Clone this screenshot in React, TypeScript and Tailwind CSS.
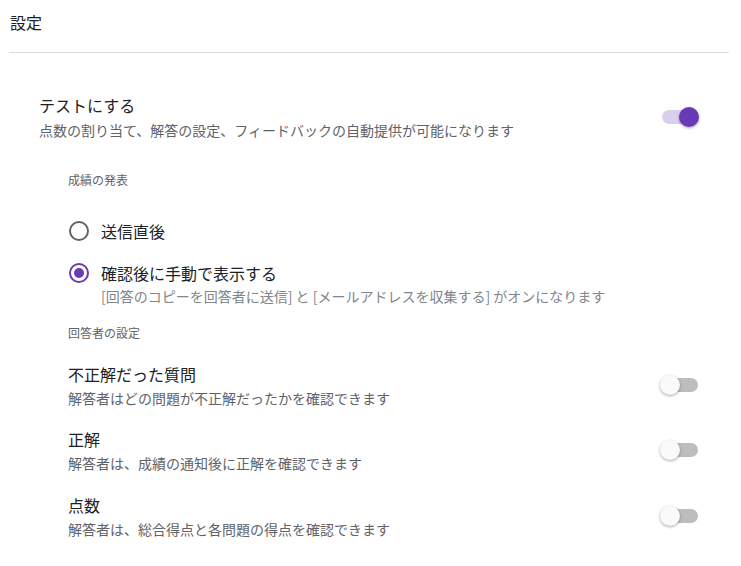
import * as React from "react";

const font = { fontFamily: "'Noto Sans CJK JP', 'Noto Sans', sans-serif" };

function Toggle({ on }: { on: boolean }) {
  return (
    <div className="relative h-5 w-9 shrink-0">
      <div
        className={
          "absolute left-0 top-[3px] h-[14px] w-9 rounded-full " +
          (on ? "bg-[#d9d0ee]" : "bg-[#bdbdbd]")
        }
      />
      <div
        className={
          "absolute top-0 h-5 w-5 rounded-full shadow-[0_1px_3px_rgba(0,0,0,0.35)] " +
          (on ? "left-[17px] bg-[#673ab7]" : "left-[-2px] bg-[#fafafa]")
        }
      />
    </div>
  );
}

function Radio({ checked }: { checked: boolean }) {
  return (
    <div
      className={
        "flex h-5 w-5 shrink-0 items-center justify-center rounded-full border-2 " +
        (checked ? "border-[#673ab7]" : "border-[#5f6368]")
      }
    >
      {checked && <div className="h-[10px] w-[10px] rounded-full bg-[#673ab7]" />}
    </div>
  );
}

function ToggleRow({ title, sub, className }: { title: string; sub: string; className: string }) {
  return (
    <div className={"flex items-center justify-between " + className}>
      <div>
        <p className="text-base leading-6 text-[#202124]">{title}</p>
        <p className="mt-[2px] text-sm leading-5 text-[#5f6368]">{sub}</p>
      </div>
      <Toggle on={false} />
    </div>
  );
}

export default function App() {
  return (
    <div className="h-[566px] w-[741px] bg-white" style={font}>
      {/* Header */}
      <div className="mx-[9px] h-[53px] w-[720px] border-b border-[#dadce0] pl-px pt-3">
        <p className="text-base leading-5 text-[#202124]">設定</p>
      </div>

      <div className="pl-[39px] pr-[43px]">
        {/* Quiz toggle */}
        <div className="mt-[40px] flex items-center justify-between">
          <div>
            <p className="text-base leading-6 text-[#202124]">テストにする</p>
            <p className="mt-[3px] text-sm leading-5 text-[#5f6368]">
              点数の割り当て、解答の設定、フィードバックの自動提供が可能になります
            </p>
          </div>
          <Toggle on={true} />
        </div>

        <div className="pl-[29px]">
          {/* Release grade */}
          <p className="mt-[32px] text-xs leading-4 text-[#5f6368]">成績の発表</p>

          <div className="mt-[31px] flex h-6 items-center gap-3 pl-px">
            <Radio checked={false} />
            <span className="text-base leading-6 text-[#202124]">送信直後</span>
          </div>

          <div className="mt-[18px] flex h-6 items-center gap-3 pl-px">
            <Radio checked={true} />
            <span className="text-base leading-6 text-[#202124]">確認後に手動で表示する</span>
          </div>
          <p className="mt-[1px] pl-[33px] text-sm leading-5 text-[#80868b]">
            [回答のコピーを回答者に送信] と [メールアドレスを収集する] がオンになります
          </p>

          {/* Respondent settings */}
          <p className="mt-[19px] text-xs leading-4 text-[#5f6368]">回答者の設定</p>

          <ToggleRow
            className="mt-[21px]"
            title="不正解だった質問"
            sub="解答者はどの問題が不正解だったかを確認できます"
          />
          <ToggleRow
            className="mt-[19px]"
            title="正解"
            sub="解答者は、成績の通知後に正解を確認できます"
          />
          <ToggleRow
            className="mt-[20px]"
            title="点数"
            sub="解答者は、総合得点と各問題の得点を確認できます"
          />
        </div>
      </div>
    </div>
  );
}
